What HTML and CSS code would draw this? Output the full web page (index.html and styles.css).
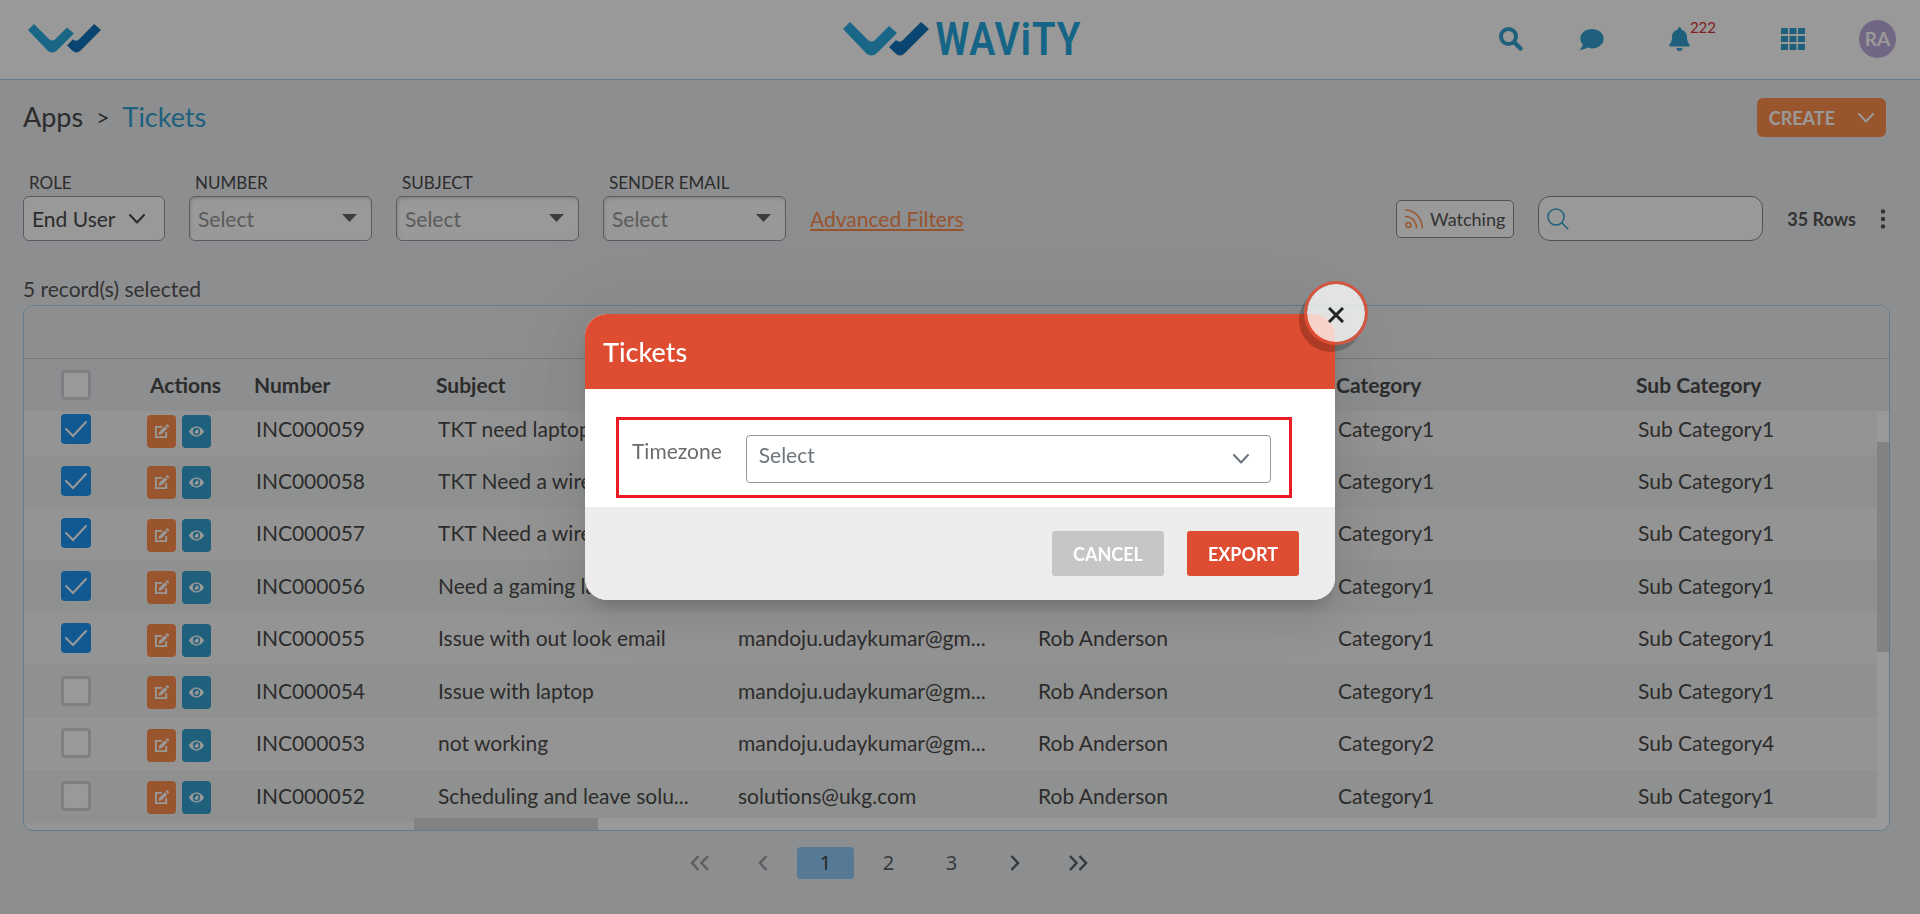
FILE: index.html
```html
<!DOCTYPE html>
<html lang="en">
<head>
<meta charset="utf-8">
<meta name="viewport" content="width=device-width, initial-scale=1">
<title>Wavity - Tickets</title>
<link rel="stylesheet" href="styles.css">
</head>
<body>
<svg class="sprite" aria-hidden="true">
  <symbol id="mark" viewBox="0 0 86 34">
    <path fill="#2aabe0" d="M7 0 25 18Q28.500 21 32 18L46 4 54 11 34 31Q28.500 36 23 31L0 7Z"/>
    <path fill="#0f73bb" d="M78 0 86 7 62 31Q57 36 52 31L46 25 53 18Q57 22 61 17Z"/>
  </symbol>
  <symbol id="edit" viewBox="0 0 16 16">
    <path fill="none" stroke="currentColor" stroke-width="2" d="M8.500 3H2v11h11V8.500"/>
    <path fill="currentColor" d="M5 11.500 5.400 8.600 11.600 2.300 14.200 4.800 8 11ZM12.300 1.600 13.400.5Q14 0 14.600.5L15.900 1.800Q16.300 2.400 15.900 3L14.900 4.100Z"/>
  </symbol>
  <symbol id="eye" viewBox="0 0 18 14">
    <path fill="currentColor" fill-rule="evenodd" d="M9 1C13 1 16.500 4 18 7 16.500 10 13 13 9 13S1.500 10 0 7C1.500 4 5 1 9 1ZM9 2.600A4.400 4.400 0 1 0 9 11.400 4.400 4.400 0 0 0 9 2.600ZM9 4.300A2.700 2.700 0 1 1 6.300 7Q8.500 7.500 9 4.300Z"/>
  </symbol>
  <symbol id="chevron" viewBox="0 0 16 10">
    <path fill="none" stroke="currentColor" stroke-width="2" stroke-linecap="round" stroke-linejoin="round" d="M1 1 8 8.500 15 1"/>
  </symbol>
  <symbol id="caret" viewBox="0 0 15 8"><path fill="currentColor" d="M0 0H15L7.500 8Z"/></symbol>
</svg>

<header class="topbar">
  <a class="brand-mark" href="#" aria-label="Home"><svg><use href="#mark"/></svg></a>
  <a class="brand" href="#"><svg><use href="#mark"/></svg><span>WAViTY</span></a>
  <nav class="tools" aria-label="Tools">
    <button class="tool tool-search" aria-label="Search"><svg viewBox="0 0 24 24"><circle cx="9.500" cy="9.500" r="7.500" fill="none" stroke="currentColor" stroke-width="4"/><path stroke="currentColor" stroke-width="4.500" stroke-linecap="round" d="m15.500 15.500 6 6"/></svg></button>
    <button class="tool" aria-label="Chat"><svg viewBox="0 0 24 24"><path fill="currentColor" d="M12 2C5.500 2 .3 6.200.3 11.600c0 2.200.9 4.200 2.500 5.900C2.400 19.600.6 21.800.3 22c-.2.400 0 .9.500.9 3 0 5.300-1.400 6.500-2.300 1.500.5 3 .8 4.700.8 6.500 0 11.700-4.300 11.700-9.700S18.500 2 12 2Z"/></svg></button>
    <button class="tool tool-bell" aria-label="Notifications"><svg viewBox="0 0 21 24"><path fill="currentColor" d="M10.500 0c-.9 0-1.500.7-1.500 1.500v.9C5.600 3.100 3 6 3 9.700c0 5-1.400 6.400-2.500 7.600-.9 1.100-.2 2.200 1 2.200h18c1.200 0 1.900-1.100 1-2.200C19.400 16.100 18 14.700 18 9.700 18 6 15.400 3.100 12 2.400v-.9C12 .7 11.400 0 10.500 0ZM7.500 21a3 3 0 0 0 6 0Z"/></svg><span class="count">222</span></button>
    <button class="tool" aria-label="Apps"><svg viewBox="0 0 24 24"><path fill="currentColor" d="M0 1h7v6H0zM8.500 1h7v6h-7zM17 1h7v6h-7zM0 9h7v6H0zM8.500 9h7v6h-7zM17 9h7v6h-7zM0 17h7v6H0zM8.500 17h7v6h-7zM17 17h7v6h-7z"/></svg></button>
    <button class="avatar">RA</button>
  </nav>
</header>

<main class="page">
  <div class="title-row">
    <nav class="crumbs" aria-label="Breadcrumb"><a href="#">Apps</a><span class="sep">&gt;</span><a class="current" href="#">Tickets</a></nav>
    <div class="create"><button>CREATE</button><button class="more" aria-label="More create options"><svg><use href="#chevron"/></svg></button></div>
  </div>

  <div class="filters">
    <div class="filter filter-role"><label for="role">ROLE</label><div class="pick"><select id="role"><option>End User</option></select><svg><use href="#chevron"/></svg></div></div>
    <div class="filter"><label for="number">NUMBER</label><div class="pick pick-caret"><select id="number"><option>Select</option></select><svg><use href="#caret"/></svg></div></div>
    <div class="filter"><label for="subject">SUBJECT</label><div class="pick pick-caret"><select id="subject"><option>Select</option></select><svg><use href="#caret"/></svg></div></div>
    <div class="filter"><label for="sender">SENDER EMAIL</label><div class="pick pick-caret"><select id="sender"><option>Select</option></select><svg><use href="#caret"/></svg></div></div>
    <a class="advanced" href="#">Advanced Filters</a>
    <div class="list-tools">
      <button class="watching"><svg viewBox="0 0 18 20" fill="none" stroke="currentColor" stroke-width="1.500"><circle cx="3.500" cy="16" r="2.500"/><path d="M0 7.500C7 7.500 11.500 12.500 11.500 19.500M0 1C10 1 17.200 9 17.200 19.500"/></svg>Watching</button>
      <div class="search"><svg viewBox="0 0 22 22" fill="none" stroke="currentColor" stroke-width="1.500"><circle cx="9" cy="9" r="8"/><path d="m14.800 14.800 6.400 6.400"/></svg><input type="search" aria-label="Search tickets"></div>
      <strong class="rows">35 Rows</strong>
      <button class="kebab" aria-label="Table menu"><svg viewBox="0 0 6 20" fill="currentColor"><circle cx="3" cy="2.500" r="2.200"/><circle cx="3" cy="10" r="2.200"/><circle cx="3" cy="17.500" r="2.200"/></svg></button>
    </div>
  </div>

  <p class="selected">5 record(s) selected</p>

  <section class="frame">
    <div class="caption"></div>
    <table class="grid">
      <colgroup><col class="c-check"><col class="c-actions"><col class="c-number"><col class="c-wide"><col class="c-wide"><col class="c-wide"><col class="c-wide"><col></colgroup>
      <thead><tr><th class="check"><input type="checkbox" aria-label="Select all"></th><th>Actions</th><th>Number</th><th>Subject</th><th></th><th></th><th>Category</th><th>Sub Category</th></tr></thead>
      <tbody>
        <tr class="clipped"><td class="check"><input type="checkbox" checked aria-label="Select INC000059"></td><td class="actions"><div><button class="edit" aria-label="Edit"><svg><use href="#edit"/></svg></button><button class="view" aria-label="View"><svg><use href="#eye"/></svg></button></div></td><td>INC000059</td><td>TKT need laptop</td><td></td><td></td><td>Category1</td><td>Sub Category1</td></tr>
        <tr><td class="check"><input type="checkbox" checked aria-label="Select INC000058"></td><td class="actions"><div><button class="edit" aria-label="Edit"><svg><use href="#edit"/></svg></button><button class="view" aria-label="View"><svg><use href="#eye"/></svg></button></div></td><td>INC000058</td><td>TKT Need a wire</td><td></td><td></td><td>Category1</td><td>Sub Category1</td></tr>
        <tr><td class="check"><input type="checkbox" checked aria-label="Select INC000057"></td><td class="actions"><div><button class="edit" aria-label="Edit"><svg><use href="#edit"/></svg></button><button class="view" aria-label="View"><svg><use href="#eye"/></svg></button></div></td><td>INC000057</td><td>TKT Need a wire</td><td></td><td></td><td>Category1</td><td>Sub Category1</td></tr>
        <tr><td class="check"><input type="checkbox" checked aria-label="Select INC000056"></td><td class="actions"><div><button class="edit" aria-label="Edit"><svg><use href="#edit"/></svg></button><button class="view" aria-label="View"><svg><use href="#eye"/></svg></button></div></td><td>INC000056</td><td>Need a gaming lap</td><td></td><td></td><td>Category1</td><td>Sub Category1</td></tr>
        <tr><td class="check"><input type="checkbox" checked aria-label="Select INC000055"></td><td class="actions"><div><button class="edit" aria-label="Edit"><svg><use href="#edit"/></svg></button><button class="view" aria-label="View"><svg><use href="#eye"/></svg></button></div></td><td>INC000055</td><td>Issue with out look email</td><td>mandoju.udaykumar@gm...</td><td>Rob Anderson</td><td>Category1</td><td>Sub Category1</td></tr>
        <tr><td class="check"><input type="checkbox" aria-label="Select INC000054"></td><td class="actions"><div><button class="edit" aria-label="Edit"><svg><use href="#edit"/></svg></button><button class="view" aria-label="View"><svg><use href="#eye"/></svg></button></div></td><td>INC000054</td><td>Issue with laptop</td><td>mandoju.udaykumar@gm...</td><td>Rob Anderson</td><td>Category1</td><td>Sub Category1</td></tr>
        <tr><td class="check"><input type="checkbox" aria-label="Select INC000053"></td><td class="actions"><div><button class="edit" aria-label="Edit"><svg><use href="#edit"/></svg></button><button class="view" aria-label="View"><svg><use href="#eye"/></svg></button></div></td><td>INC000053</td><td>not working</td><td>mandoju.udaykumar@gm...</td><td>Rob Anderson</td><td>Category2</td><td>Sub Category4</td></tr>
        <tr><td class="check"><input type="checkbox" aria-label="Select INC000052"></td><td class="actions"><div><button class="edit" aria-label="Edit"><svg><use href="#edit"/></svg></button><button class="view" aria-label="View"><svg><use href="#eye"/></svg></button></div></td><td>INC000052</td><td>Scheduling and leave solu...</td><td>solutions@ukg.com</td><td>Rob Anderson</td><td>Category1</td><td>Sub Category1</td></tr>
      </tbody>
    </table>
    <div class="bar bar-y"><i></i></div>
    <div class="bar bar-x"><i></i></div>
  </section>

  <nav class="pager" aria-label="Pages">
    <button disabled aria-label="First page"><svg viewBox="0 0 20 16"><path d="M8.500 1 2 8l6.500 7M18 1l-6.500 7 6.500 7"/></svg></button>
    <button disabled aria-label="Previous page"><svg viewBox="0 0 20 16"><path d="M13.500 1 7 8l6.500 7"/></svg></button>
    <button class="active">1</button>
    <button>2</button>
    <button>3</button>
    <button aria-label="Next page"><svg viewBox="0 0 20 16"><path d="m6.500 1 6.500 7-6.500 7"/></svg></button>
    <button aria-label="Last page"><svg viewBox="0 0 20 16"><path d="m2 1 6.500 7L2 15M11.500 1 18 8l-6.500 7"/></svg></button>
  </nav>
</main>

<div class="overlay">
  <div class="modal" role="dialog" aria-modal="true" aria-labelledby="modal-title">
    <h2 id="modal-title">Tickets</h2>
    <div class="modal-body">
      <div class="field">
        <label for="timezone">Timezone</label>
        <div class="pick pick-zone"><select id="timezone"><option>Select</option></select><svg><use href="#chevron"/></svg></div>
      </div>
    </div>
    <div class="modal-foot"><button class="cancel">CANCEL</button><button class="export">EXPORT</button></div>
    <button class="close" aria-label="Close"><svg viewBox="0 0 16 16"><path stroke="#222" stroke-width="3" d="m1 1 14 14m0-14-14 14"/></svg></button>
  </div>
</div>
</body>
</html>
```

FILE: styles.css
```css
* { box-sizing: border-box; }
body {
  margin: 0;
  min-height: 100vh;
  background: #ebedf0;
  color: #4a4a4a;
  font: 21px/24px Lato, "Open Sans", sans-serif;
}
button, select, input { font: inherit; color: inherit; margin: 0; }
button { border: 0; padding: 0; background: none; cursor: pointer; }
a { color: inherit; text-decoration: none; }
svg { display: block; }
.sprite { position: absolute; width: 0; height: 0; }

/* Top bar */
.topbar {
  display: grid;
  grid-template-columns: 1fr auto 1fr;
  align-items: center;
  height: 80px;
  padding: 0 24px 2px 28px;
  background: #fff;
  border-bottom: 1px solid #9bd4e8;
}
.brand-mark svg { width: 73px; height: 29px; }
.brand { display: flex; align-items: center; gap: 6px; }
.brand svg { width: 86px; height: 34px; }
.brand span {
  color: #25a9e0;
  font: 500 46px/48px "Roboto Condensed", "Liberation Sans Narrow", "DejaVu Sans Condensed", sans-serif;
}
.tools { display: flex; align-items: center; justify-content: flex-end; gap: 54px; }
.tool { display: flex; color: #34a2d0; }
.tool svg { width: 24px; height: 24px; }
.tool-search { margin-right: 3px; }
.tool-bell { margin: 0 11px; }
.tool-bell svg { width: 21px; }
.count { margin-top: -12px; color: #d92f35; font-size: 15px; line-height: 24px; }
.avatar {
  width: 37px;
  height: 38px;
  border-radius: 50%;
  background: #bcabda;
  color: #fff;
  font-size: 19px;
  font-weight: 700;
}

/* Title row */
.page { padding: 18px 30px 16px 23px; }
.title-row { display: flex; align-items: center; justify-content: space-between; padding-right: 4px; }
.crumbs { display: flex; align-items: center; gap: 13px; padding-bottom: 2px; font-size: 27px; color: #4a4a4a; }
.crumbs .sep { font-size: 23px; }
.crumbs .current { color: #34a2d0; }
.create { display: flex; border-radius: 6px; background: #ff8e4d; color: #fff; font-size: 18px; font-weight: 700; }
.create button { height: 39px; padding: 0 12px; }
.create .more { padding: 0 12px 0 11px; }
.create svg { width: 16px; height: 10px; }

/* Filters */
.filters { display: flex; align-items: flex-end; gap: 24px; margin-top: 34px; padding-right: 4px; }
.filter { width: 183px; font-size: 17px; }
.filter-role { width: 142px; }
.filter label { display: block; padding: 0 0 1px 6px; }
.pick { position: relative; height: 45px; font-size: 21px; }
.pick select {
  appearance: none;
  width: 100%;
  height: 100%;
  padding: 1px 8px 0;
  border: 1px solid #979aa0;
  border-radius: 6px;
  background: #fff;
}
.pick svg { position: absolute; right: 20px; top: 18px; width: 16px; height: 10px; pointer-events: none; }
.pick-caret select { color: #999; box-shadow: inset 1px 2px 3px #ddd; }
.pick-caret svg { right: 15px; width: 15px; height: 8px; color: #666; }
.advanced { line-height: 45px; color: #ff8e4d; text-decoration: underline; }
.list-tools { display: flex; align-items: center; gap: 24px; height: 45px; margin-left: auto; font-size: 18px; color: #555; }
.watching {
  display: flex;
  align-items: center;
  gap: 7px;
  height: 38px;
  padding: 0 8px;
  border: 1px solid #888;
  border-radius: 5px;
  background: #fff;
}
.watching svg { width: 18px; height: 20px; color: #ff8e4d; }
.search {
  display: flex;
  align-items: center;
  width: 225px;
  height: 45px;
  padding: 0 8px;
  border: 1px solid #888;
  border-radius: 12px;
  background: #fff;
}
.search svg { flex: none; width: 22px; height: 22px; color: #34a2d0; }
.search input { flex: 1; min-width: 0; border: 0; outline: 0; background: none; }
.kebab svg { width: 6px; height: 20px; }

.selected { margin: 36px 0 4px; color: #555; }

/* Table */
.frame {
  position: relative;
  overflow: hidden;
  padding-bottom: 7px;
  border: 1px solid #9bd4e8;
  border-radius: 10px;
  background: #f9f9f9;
}
.caption { height: 53px; border-bottom: 1px solid #c4c6c9; background: #ebedf0; }
.grid { width: 100%; table-layout: fixed; border-collapse: collapse; }
.c-check, .c-actions { width: 104px; }
.c-number { width: 182px; }
.c-wide { width: 300px; }
.grid th { height: 52px; padding: 0 22px; background: #ebedf0; font-weight: 700; text-align: left; }
.grid td { height: 52px; padding: 0 24px 2px; background: #f8f7f7; overflow: hidden; text-overflow: ellipsis; white-space: nowrap; }
.grid tr:nth-child(even) td { height: 53px; background: #eff2f0; }
.grid .clipped td { height: 44px; padding-bottom: 8px; }
.grid .check { padding-left: 0; padding-right: 0; text-align: center; }
.grid .actions { padding: 0 0 0 19px; }
.grid .clipped .actions { padding-bottom: 6px; }
.check input {
  appearance: none;
  display: block;
  width: 30px;
  height: 30px;
  margin: 0 auto;
  border: 3px solid #d2d4da;
  border-radius: 4px;
  background: #fff;
}
.check input:checked {
  border: 0;
  background: #1e95f3 url("data:image/svg+xml,%3Csvg xmlns='http://www.w3.org/2000/svg' viewBox='0 0 30 30'%3E%3Cpath d='M5 15l7 7L25 8' fill='none' stroke='white' stroke-width='2' stroke-linecap='round'/%3E%3C/svg%3E");
}
.actions div { display: flex; gap: 6px; padding-top: 2px; }
.actions button { display: grid; place-items: center; width: 29px; height: 33px; border-radius: 4px; color: #fff; }
.actions svg { width: 15px; height: 15px; }
.actions .edit { background: #ff8e4d; }
.actions .view { background: #34a2d0; }
.bar { position: absolute; background: #fff; }
.bar i { position: absolute; background: #d9d9d9; }
.bar-y { top: 105px; right: 0; bottom: 0; width: 12px; }
.bar-y i { top: 31px; left: 0; width: 12px; height: 210px; }
.bar-x { left: 390px; right: 0; bottom: 0; height: 12px; }
.bar-x i { top: 0; left: 0; width: 184px; height: 12px; }

/* Pager */
.pager { display: flex; justify-content: center; gap: 6px; margin-top: 16px; padding-right: 136px; font: 20px/32px "Noto Sans", "Open Sans", sans-serif; }
.pager button { display: grid; place-items: center; width: 57px; height: 32px; border-radius: 4px; color: #5b6168; }
.pager .active { background: #90cbfb; color: #444; }
.pager svg { width: 20px; height: 16px; fill: none; stroke: currentColor; stroke-width: 2.500; }
.pager button:disabled { color: #9c9ea1; }

/* Export dialog */
.overlay {
  position: fixed;
  inset: 0;
  display: flex;
  align-items: center;
  justify-content: center;
  background: rgba(0, 0, 0, 0.4);
}
.modal {
  position: relative;
  width: 750px;
  max-width: 94%;
  border-radius: 22px;
  background: #fff;
  box-shadow: 0 11px 15px -7px rgba(0, 0, 0, 0.2), 0 9px 46px 8px rgba(0, 0, 0, 0.08), 0 0 120px 60px rgba(0, 0, 0, 0.03);
}
.modal h2 {
  margin: 0;
  padding: 0 18px;
  border-radius: 22px 22px 0 0;
  background: #de4c31;
  color: #fff;
  font-size: 27px;
  font-weight: 500;
  line-height: 75px;
}
.modal-body { padding: 28px 43px 9px 31px; }
.field {
  display: flex;
  gap: 24px;
  padding: 15px 18px 12px 13px;
  border: 3px solid #ed1c24;
}
.field label { padding-top: 4px; color: #6b6b6b; }
.pick-zone { flex: 1; height: 48px; }
.pick-zone select { padding: 0 12px 8px; border-color: #999; border-radius: 4px; color: #6c757d; }
.pick-zone svg { right: 22px; top: 19px; color: #6c757d; }
.modal-foot {
  display: flex;
  justify-content: flex-end;
  gap: 23px;
  padding: 24px 36px;
  border-radius: 0 0 22px 22px;
  background: #ececec;
}
.modal-foot button { width: 112px; height: 45px; border-radius: 3px; color: #fff; font-size: 18px; font-weight: 700; }
.modal-foot .cancel { background: #c6c6c6; }
.modal-foot .export { background: #de4c31; }
.close {
  position: absolute;
  top: -33px;
  right: -33px;
  display: grid;
  place-items: center;
  width: 64px;
  height: 64px;
  padding-top: 3px;
  border: 3px solid rgba(222, 76, 49, 0.85);
  border-radius: 50%;
  background: rgba(255, 255, 255, 0.75) padding-box;
  box-shadow: -5px 7px 0 rgba(0, 0, 0, 0.22);
}
.close svg { width: 16px; height: 16px; }
```
